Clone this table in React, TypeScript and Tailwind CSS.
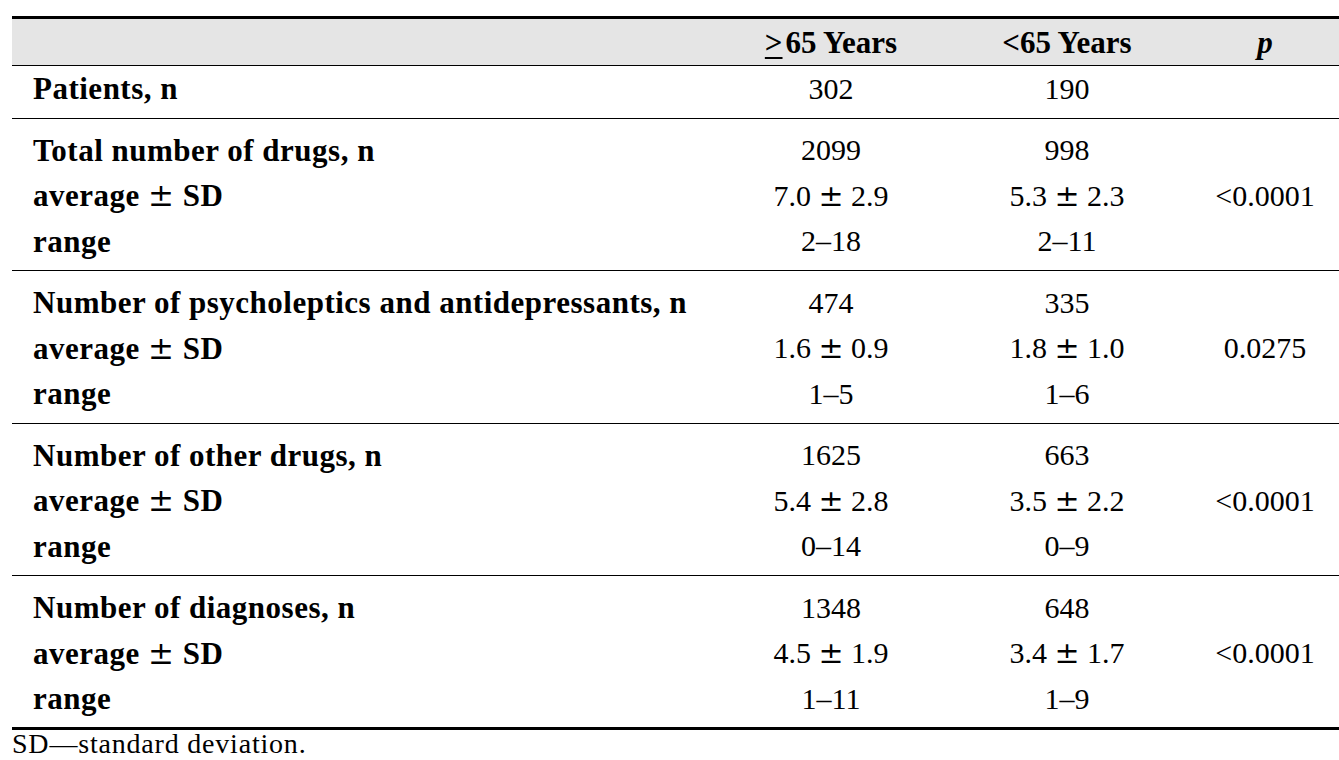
const groups = [
  {
    title: "Total number of drugs, n",
    rows: [
      ["2099", "998"],
      ["7.0 ± 2.9", "5.3 ± 2.3"],
      ["2–18", "2–11"],
    ],
    p: "<0.0001",
  },
  {
    title: "Number of psycholeptics and antidepressants, n",
    rows: [
      ["474", "335"],
      ["1.6 ± 0.9", "1.8 ± 1.0"],
      ["1–5", "1–6"],
    ],
    p: "0.0275",
  },
  {
    title: "Number of other drugs, n",
    rows: [
      ["1625", "663"],
      ["5.4 ± 2.8", "3.5 ± 2.2"],
      ["0–14", "0–9"],
    ],
    p: "<0.0001",
  },
  {
    title: "Number of diagnoses, n",
    rows: [
      ["1348", "648"],
      ["4.5 ± 1.9", "3.4 ± 1.7"],
      ["1–11", "1–9"],
    ],
    p: "<0.0001",
  },
];

const labels = (title: string) => [title, "average ± SD", "range"];

// the ± sign is drawn wider in the original (math font)
const Pm = ({ text }: { text: string }) => {
  const parts = text.split("±");
  if (parts.length < 2) return <>{text}</>;
  return (
    <>
      {parts[0]}
      <span className="font-['DejaVu_Serif'] font-normal">±</span>
      {parts[1]}
    </>
  );
};

const Row = ({
  label,
  a,
  b,
  p,
}: {
  label: string;
  a: string;
  b: string;
  p?: string;
}) => (
  <div className="flex h-[45.5px] items-center">
    <div className="w-[701px] pl-[21px] text-[31px] font-bold tracking-[0.5px]">
      <Pm text={label} />
    </div>
    <div className="w-[236px] text-center">
      <Pm text={a} />
    </div>
    <div className="w-[236px] text-center">
      <Pm text={b} />
    </div>
    <div className="flex-1 pl-[6px] text-center">{p}</div>
  </div>
);

export default function App() {
  return (
    <div
      className="h-[760px] overflow-hidden bg-white pt-[16px] pl-[12px] text-[30px] leading-none text-black"
      style={{ fontFamily: '"Liberation Serif", "DejaVu Serif", serif' }}
    >
      <div className="border-t-[3px] border-black">
        <div className="flex h-[47px] items-center border-b border-black bg-[#e5e5e5] text-[31px] font-bold">
          <div className="w-[701px]" />
          <div className="w-[236px] text-center">
            <span className="mr-[3px] underline decoration-[1.5px] underline-offset-[4px]">&gt;</span>65 Years
          </div>
          <div className="w-[236px] text-center">&lt;65 Years</div>
          <div className="flex-1 pl-[6px] text-center italic">p</div>
        </div>

        <div className="border-b border-black pb-[6px]">
          <Row label="Patients, n" a="302" b="190" />
        </div>

        {groups.map((g, gi) => (
          <div
            key={g.title}
            className={`pt-[9px] ${gi < groups.length - 1 ? "pb-[6px] border-b border-black" : "pb-[5px] border-b-[3px] border-black"}`}
          >
            {g.rows.map((r, i) => (
              <Row key={i} label={labels(g.title)[i]} a={r[0]} b={r[1]} p={i === 1 ? g.p : undefined} />
            ))}
          </div>
        ))}
      </div>
      <div className="text-[28px] tracking-[0.8px]">SD—standard deviation.</div>
    </div>
  );
}
